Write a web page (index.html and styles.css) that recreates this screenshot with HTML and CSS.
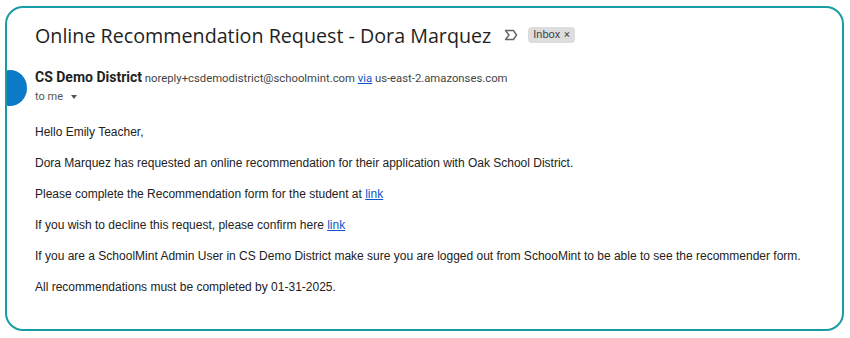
FILE: index.html
```html
<!DOCTYPE html>
<html lang="en">
<head>
  <meta charset="UTF-8">
  <title>Online Recommendation Request</title>
  <link rel="stylesheet" href="styles.css">
</head>
<body>
  <div class="frame">
    <div class="avatar"></div>

    <div class="subject">
      <h1>Online Recommendation Request - Dora Marquez</h1>
      <svg class="marker" width="14" height="12" viewBox="0 0 14 12">
        <path d="M1.5 1.5h8l3 4.5-3 4.5h-8l3.5-4.5z" fill="none" stroke="#666" stroke-width="1.4" stroke-linejoin="round"/>
      </svg>
      <span class="chip">Inbox <span class="chip-x">×</span></span>
    </div>

    <div class="sender">
      <strong>CS Demo District</strong>
      <span class="addr">noreply+csdemodistrict@schoolmint.com <a href="#">via</a> us-east-2.amazonses.com</span>
    </div>
    <div class="to">to me <span class="caret"></span></div>

    <div class="message">
      <p>Hello Emily Teacher,</p>
      <p>Dora Marquez has requested an online recommendation for their application with Oak School District.</p>
      <p>Please complete the Recommendation form for the student at <a href="#">link</a></p>
      <p>If you wish to decline this request, please confirm here <a href="#">link</a></p>
      <p>If you are a SchoolMint Admin User in CS Demo District make sure you are logged out from SchooMint to be able to see the recommender form.</p>
      <p>All recommendations must be completed by 01-31-2025.</p>
    </div>
  </div>
</body>
</html>
```

FILE: styles.css
```css
body {
  margin: 0;
  background: #fff;
  font-family: "Liberation Sans", Arial, sans-serif;
  color: #222;
}

.frame {
  position: relative;
  overflow: hidden;
  box-sizing: border-box;
  height: 325px;
  margin: 6px 6px 0 5px;
  border: 2px solid #1a9ca5;
  border-radius: 18px;
  padding: 15px 0 0 28px;
}

.avatar {
  position: absolute;
  left: -14px;
  top: 62px;
  width: 34px;
  height: 36px;
  border-radius: 50%;
  background: #0b7ac7;
}

.subject {
  display: flex;
  align-items: center;
  height: 24px;
}

h1 {
  margin: 0;
  font-family: "Open Sans", sans-serif;
  font-weight: 400;
  font-size: 19.7px;
  color: #1f1f1f;
}

.marker {
  margin-left: 13px;
}

.chip {
  margin-left: 10px;
  background: #ddd;
  border-radius: 4px;
  padding: 1px 5px 2px;
  font-family: Roboto, sans-serif;
  font-size: 11px;
  color: #444;
}

.chip-x {
  font-size: 11px;
  margin-left: 1px;
}

.sender {
  margin-top: 22px;
  font-family: Roboto, sans-serif;
  font-size: 11.3px;
  color: #1f1f1f;
}

.sender strong {
  font-size: 14px;
  font-weight: 700;
}

.addr {
  color: #444;
}

.addr a {
  color: #0b57d0;
}

.to {
  margin-top: 5px;
  font-family: Roboto, sans-serif;
  font-size: 11px;
  color: #555;
}

.caret {
  display: inline-block;
  margin-left: 5px;
  vertical-align: middle;
  border-left: 3.5px solid transparent;
  border-right: 3.5px solid transparent;
  border-top: 4px solid #555;
}

.message {
  margin-top: 22px;
  font-size: 12px;
}

.message p {
  margin: 0 0 16px;
  line-height: 15px;
}

.message a {
  color: #1155cc;
}
```
